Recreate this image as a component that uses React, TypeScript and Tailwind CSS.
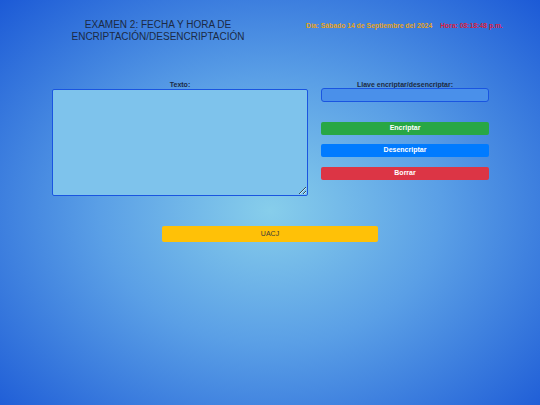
export default function App() {
  return (
    <div
      className="w-[540px] h-[405px] overflow-hidden bg-[radial-gradient(ellipse_at_50%_52%,#87ceeb_0%,#5a9fe6_45%,#1c5ad6_100%)] font-['Liberation_Sans',Arial,sans-serif]"
    >
      {/* Header */}
      <div className="flex items-start pt-[19px]">
        <div className="pl-[10px] w-[306px] text-center text-[10px] leading-[12px] text-[#1b2a44]">
          <div>EXAMEN 2: FECHA Y HORA DE</div>
          <div>ENCRIPTACIÓN/DESENCRIPTACIÓN</div>
        </div>
        <div className="flex gap-[8px] pt-[2px] text-[6.8px] font-bold">
          <span className="text-[#e8a317]">Día: Sábado 14 de Septiembre del 2024</span>
          <span className="text-[#dc1f3c]">Hora: 08:18:48 p.m.</span>
        </div>
      </div>

      {/* Main */}
      <div className="flex gap-[13px] pl-[52px] pt-[38px]">
        <div className="w-[256px] flex flex-col items-center">
          <label className="text-[7px] leading-[8px] font-bold text-[#1b2a44]">Texto:</label>
          <textarea className="w-full h-[107px] bg-[#7ec3ec] border border-[#1a55e0] rounded-[2px] resize-y outline-none" />
        </div>
        <div className="w-[168px] flex flex-col items-center">
          <label className="text-[7px] leading-[8px] font-bold text-[#1b2a44] mb-[-1px]">Llave encriptar/desencriptar:</label>
          <input className="w-full h-[14px] bg-[#4a90ea] border border-[#1a55e0] rounded-[3px] outline-none" />
          <button className="w-full h-[13px] mt-[20px] rounded-[2px] bg-[#28a745] text-white text-[7px] font-bold">Encriptar</button>
          <button className="w-full h-[13px] mt-[9px] rounded-[2px] bg-[#007bff] text-white text-[7px] font-bold">Desencriptar</button>
          <button className="w-full h-[13px] mt-[10px] rounded-[2px] bg-[#dc3545] text-white text-[7px] font-bold">Borrar</button>
        </div>
      </div>

      {/* Footer button */}
      <div className="flex pl-[162px] pt-[30px]">
        <button className="w-[216px] h-[16px] rounded-[2px] bg-[#ffc107] text-[#3b3b3b] text-[7px]">UACJ</button>
      </div>
    </div>
  );
}
